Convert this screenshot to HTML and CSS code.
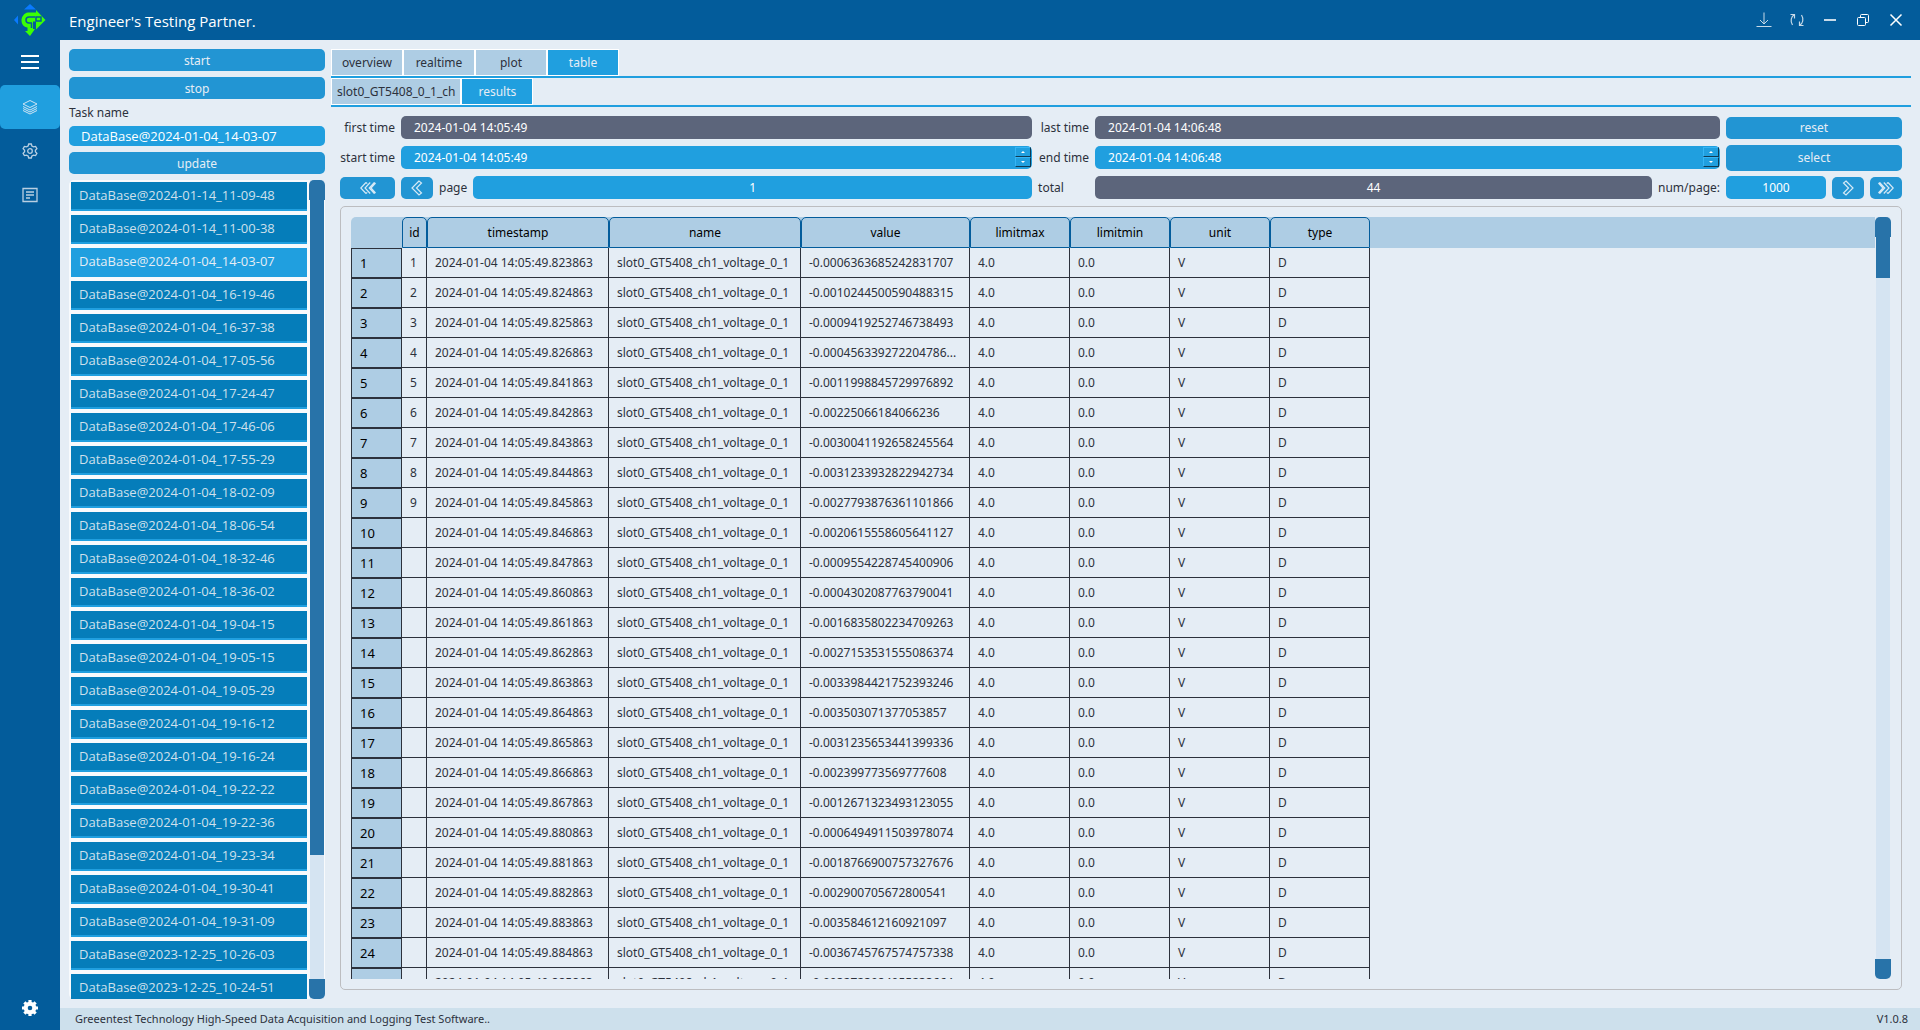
FILE: index.html
```html
<!DOCTYPE html>
<html lang="en">
<head>
  <meta charset="UTF-8">
  <title>Engineer's Testing Partner</title>
  <link rel="stylesheet" href="styles.css">
</head>
<body>
  <header class="titlebar">
    <svg class="logo" viewBox="0 0 32 32" width="32" height="32">
      <path fill="#0a7aff" d="M16 0l6 5.500H10zM0 16l4-4.500v9z"/>
      <path fill="#3bff05" d="M14 8.500h8V6l9.500 10L22 25.500v-8h-3V25h2l-5 7-5-5h2.500v-3.500C9.500 23 7.500 20 7.500 16.500S10 9 14 8.500z"/>
      <path fill="none" stroke="#035c9b" stroke-width="1.500" d="M27 13h-5v4h5zM21 13h-6c-2 0-3 1-3 3s1 3 3 3h3M17.500 19v5"/>
    </svg>
    <h1>Engineer's Testing Partner.</h1>
    <div class="window-buttons">
      <button aria-label="Download"><svg viewBox="0 0 16 16" width="16" height="16"><path d="M8 .5v11M4 8l4 4 4-4M.5 14.500h15" stroke="#c8dae8"/></svg></button>
      <button aria-label="Sync"><svg viewBox="0 0 16 16" width="16" height="16"><path d="M1.500 2.500h4v4M5.500 2.500C2 4.500 1 9 3.500 13M14.500 13.500h-4v-4M10.500 13.500c3.500-2 4.500-6.500 2-10.500" stroke="#c8dae8" stroke-width="1.200"/></svg></button>
      <button aria-label="Minimize"><svg viewBox="0 0 16 16" width="16" height="16"><path d="M2 8h12" stroke-width="2" stroke="#c8dae8"/></svg></button>
      <button aria-label="Restore"><svg viewBox="0 0 16 16" width="16" height="16"><path d="M3.500 5.500h6a1 1 0 011 1v6a1 1 0 01-1 1h-6a1 1 0 01-1-1v-6a1 1 0 011-1zM5.500 5V3.500a1 1 0 011-1h6a1 1 0 011 1v6a1 1 0 01-1 1H11"/></svg></button>
      <button aria-label="Close"><svg viewBox="0 0 16 16" width="16" height="16"><path d="M2.500 2.500l11 11M13.500 2.500l-11 11" stroke-width="1.500"/></svg></button>
    </div>
  </header>

  <div class="app">
    <nav class="sidebar">
      <button class="nav-btn" aria-label="Menu"><svg viewBox="0 0 20 16" width="20" height="16"><path d="M1 2h18M1 8h18M1 14h18" stroke-width="2"/></svg></button>
      <button class="nav-btn active" aria-label="Data"><svg viewBox="0 0 16 16" width="16" height="16"><path d="M8 1.500l7 3.500-7 3.500L1 5zM1 7.500L8 11l7-3.500M1 9.500L8 13l7-3.500M1 11.500L8 15l7-3.500" stroke="#cfe4f4"/></svg></button>
      <button class="nav-btn" aria-label="Configuration"><svg viewBox="0 0 16 16" width="16" height="16"><path d="M6.700 1h2.600l.6 2 1.600.9 2.100-.5 1.300 2.300L13.400 7.200v1.600l1.500 1.500-1.300 2.300-2.100-.5-1.600.9-.6 2H6.700l-.6-2-1.600-.9-2.100.5-1.300-2.300 1.500-1.500V7.200L1.100 5.700l1.300-2.300 2.100.5L6.100 3z" stroke="#b9cfe2" stroke-width="1.300"/><circle cx="8" cy="8" r="2.300" stroke="#b9cfe2" stroke-width="1.300"/></svg></button>
      <button class="nav-btn" aria-label="Log"><svg viewBox="0 0 16 16" width="16" height="16"><path d="M1 1.500h14v13H1zM4 5h8M4 8h8M4 11h4" stroke="#b9cfe2" stroke-width="1.300"/></svg></button>
      <button class="nav-btn nav-bottom" aria-label="Settings"><svg viewBox="0 0 16 16" width="16" height="16"><circle cx="8" cy="8" r="4.300" stroke-width="4"/><path d="M8 0v3M8 13v3M0 8h3M13 8h3M2.400 2.400l2 2M11.600 11.600l2 2M13.600 2.400l-2 2M4.400 11.600l-2 2" stroke-width="3.200"/></svg></button>
    </nav>

    <main class="content">
      <div class="workspace">
        <section class="tasks">
          <button class="btn">start</button>
          <button class="btn">stop</button>
          <label for="taskName">Task name</label>
          <input class="field task-name" id="taskName" type="text" value="DataBase@2024-01-04_14-03-07">
          <button class="btn">update</button>
          <div class="list">
            <div class="list-items" id="taskList"></div>
            <div class="scrollbar task-scroll"><i class="cap"></i><i class="thumb"></i><i class="cap end"></i></div>
          </div>
        </section>

        <section class="view">
          <div class="tabs">
            <button>overview</button>
            <button>realtime</button>
            <button>plot</button>
            <button class="active">table</button>
          </div>
          <div class="tabs">
            <button>slot0_GT5408_0_1_ch</button>
            <button class="active">results</button>
          </div>

          <div class="results">
            <div class="filters">
              <label class="right" for="firstTime">first time</label>
              <input class="field gray" id="firstTime" type="text" value="2024-01-04 14:05:49" readonly>
              <label class="right" for="lastTime">last time</label>
              <input class="field gray" id="lastTime" type="text" value="2024-01-04 14:06:48" readonly>
              <button class="btn">reset</button>

              <label class="right" for="startTime">start time</label>
              <div class="spin">
                <input class="field" id="startTime" type="text" value="2024-01-04 14:05:49">
                <div class="steps"><button class="up" aria-label="Later"></button><button class="down" aria-label="Earlier"></button></div>
              </div>
              <label class="right" for="endTime">end time</label>
              <div class="spin">
                <input class="field" id="endTime" type="text" value="2024-01-04 14:06:48">
                <div class="steps"><button class="up" aria-label="Later"></button><button class="down" aria-label="Earlier"></button></div>
              </div>
              <button class="btn tall">select</button>

              <button class="btn" aria-label="First page"><svg viewBox="0 0 16 12" width="16" height="12"><path d="M6 .5L.8 6 6 11.500M10.200 .5L5 6l5.200 5.500M14.400 .5L9.200 6l5.200 5.500M6 .5l1.200 1.200M6 11.500l1.200-1.200M14.400 .5l.8 1L11 6l4.200 4.500-.8 1" stroke-width="1.200"/></svg></button>
              <div class="group">
                <button class="btn small" aria-label="Previous page"><svg viewBox="0 0 12 16" width="12" height="16"><path d="M8 1L1 8l7 7 2.500-2L5.500 8l5-5z" stroke-width="1.200"/></svg></button>
                <label for="page">page</label>
                <input class="field center" id="page" type="text" value="1">
              </div>
              <label for="total">total</label>
              <div class="group">
                <input class="field gray center" id="total" type="text" value="44" readonly>
                <label for="perPage">num/page:</label>
              </div>
              <div class="group">
                <input class="field center" id="perPage" type="text" value="1000">
                <button class="btn small" aria-label="Next page"><svg viewBox="0 0 12 16" width="12" height="16"><path d="M4 1l7 7-7 7-2.500-2 5-5-5-5z" stroke-width="1.200"/></svg></button>
                <button class="btn small" aria-label="Last page"><svg viewBox="0 0 16 12" width="16" height="12"><path d="M10 .5L15.200 6 10 11.500M5.800 .5L11 6l-5.200 5.500M1.600 .5L6.800 6l-5.200 5.500M10 .5L8.800 1.700M10 11.500l-1.200-1.200M1.600 .5l-.8 1L5 6 .8 10.500l.8 1" stroke-width="1.200"/></svg></button>
              </div>
            </div>

            <div class="panel">
              <div class="table-area">
                <div class="header-bg"></div>
                <table>
                  <colgroup><col class="c-row"><col class="c-id"><col class="c-time"><col class="c-name"><col class="c-value"><col class="c-std"><col class="c-std"><col class="c-std"><col class="c-std"></colgroup>
                  <thead>
                    <tr><td></td><th>id</th><th>timestamp</th><th>name</th><th>value</th><th>limitmax</th><th>limitmin</th><th>unit</th><th>type</th></tr>
                  </thead>
                  <tbody id="rows"></tbody>
                </table>
              </div>
              <div class="scrollbar table-scroll"><i class="cap"></i><i class="thumb"></i><i class="cap end"></i></div>
            </div>
          </div>
        </section>
      </div>
      <footer class="statusbar">
        <span>Greeentest Technology High-Speed Data Acquisition and Logging Test Software..</span>
        <span>V1.0.8</span>
      </footer>
    </main>
  </div>

  <script>
    const tasks = [
      '2024-01-14_11-09-48', '2024-01-14_11-00-38', '2024-01-04_14-03-07', '2024-01-04_16-19-46',
      '2024-01-04_16-37-38', '2024-01-04_17-05-56', '2024-01-04_17-24-47', '2024-01-04_17-46-06',
      '2024-01-04_17-55-29', '2024-01-04_18-02-09', '2024-01-04_18-06-54', '2024-01-04_18-32-46',
      '2024-01-04_18-36-02', '2024-01-04_19-04-15', '2024-01-04_19-05-15', '2024-01-04_19-05-29',
      '2024-01-04_19-16-12', '2024-01-04_19-16-24', '2024-01-04_19-22-22', '2024-01-04_19-22-36',
      '2024-01-04_19-23-34', '2024-01-04_19-30-41', '2024-01-04_19-31-09', '2023-12-25_10-26-03',
      '2023-12-25_10-24-51'
    ];
    const selected = '2024-01-04_14-03-07';

    // [microseconds, value]
    const samples = [
      ['823863', '-0.0006363685242831707'],
      ['824863', '-0.0010244500590488315'],
      ['825863', '-0.0009419252746738493'],
      ['826863', '-0.000456339272204786...'],
      ['841863', '-0.0011998845729976892'],
      ['842863', '-0.00225066184066236'],
      ['843863', '-0.0030041192658245564'],
      ['844863', '-0.0031233932822942734'],
      ['845863', '-0.0027793876361101866'],
      ['846863', '-0.0020615558605641127'],
      ['847863', '-0.0009554228745400906'],
      ['860863', '-0.0004302087763790041'],
      ['861863', '-0.0016835802234709263'],
      ['862863', '-0.0027153531555086374'],
      ['863863', '-0.0033984421752393246'],
      ['864863', '-0.003503071377053857'],
      ['865863', '-0.0031235653441399336'],
      ['866863', '-0.002399773569777608'],
      ['867863', '-0.0012671323493123055'],
      ['880863', '-0.0006494911503978074'],
      ['881863', '-0.0018766900757327676'],
      ['882863', '-0.002900705672800541'],
      ['883863', '-0.003584612160921097'],
      ['884863', '-0.0036745767574757338'],
      ['885863', '-0.0032723984055233664']
    ];

    document.getElementById('taskList').innerHTML = tasks.map(t =>
      `<button class="${t === selected ? 'item selected' : 'item'}">DataBase@${t}</button>`
    ).join('');

    document.getElementById('rows').innerHTML = samples.map(([frac, value], i) => `
      <tr>
        <th scope="row">${i + 1}</th>
        <td>${i < 9 ? i + 1 : ''}</td>
        <td>2024-01-04 14:05:49.${frac}</td>
        <td>slot0_GT5408_ch1_voltage_0_1</td>
        <td>${value}</td>
        <td>4.0</td>
        <td>0.0</td>
        <td>V</td>
        <td>D</td>
      </tr>`).join('');
  </script>
</body>
</html>
```
FILE: styles.css
```css
* {
  box-sizing: border-box;
}
body {
  margin: 0;
  height: 100vh;
  display: flex;
  flex-direction: column;
  overflow: hidden;
  background: #e5edf5;
  color: #2c313c;
  font-family: "Noto Sans", "Open Sans", sans-serif;
  font-size: 12px;
}
button, input {
  font: inherit;
  color: inherit;
  border: 0;
  padding: 0;
  margin: 0;
  background: none;
}
svg {
  display: block;
  fill: none;
  stroke: #fff;
}

/* title bar */
.titlebar {
  height: 40px;
  flex: none;
  display: flex;
  align-items: center;
  padding: 0 16px 0 14px;
  background: #035c9b;
  color: #fff;
}
.titlebar h1 {
  flex: 1;
  margin: 0 0 0 23px;
  padding-top: 2px;
  font-family: "Open Sans", "Noto Sans", sans-serif;
  font-size: 15px;
  font-weight: normal;
}
.logo {
  stroke: none;
}
.window-buttons {
  display: flex;
  gap: 17px;
}

/* left icon bar */
.app {
  flex: 1;
  min-height: 0;
  display: flex;
}
.sidebar {
  width: 60px;
  display: flex;
  flex-direction: column;
  background: #035c9b;
}
.nav-btn {
  height: 44px;
  display: flex;
  align-items: center;
  justify-content: center;
  border-radius: 5px;
}
.nav-btn:first-child {
  margin-bottom: 1px;
}
.nav-btn.active {
  background: #209fdf;
}
.nav-bottom {
  margin-top: auto;
}
.content {
  flex: 1;
  min-width: 0;
  display: flex;
  flex-direction: column;
}
.workspace {
  flex: 1;
  min-height: 0;
  display: flex;
  gap: 6px;
  padding: 9px;
}
.statusbar {
  height: 22px;
  display: flex;
  align-items: center;
  justify-content: space-between;
  padding: 0 12px 1px 15px;
  background: #cde0ec;
  font-size: 11px;
}

/* buttons and fields */
.btn {
  height: 22px;
  display: flex;
  align-items: center;
  justify-content: center;
  border-radius: 5px;
  background: #2295d3;
  color: #e5edf5;
}
.btn svg {
  stroke: #d5e9f6;
}
.btn.small {
  width: 32px;
  flex: none;
}
.btn.tall {
  height: 26px;
}
.field {
  width: 100%;
  min-width: 0;
  height: 23px;
  padding: 0 13px;
  border-radius: 5px;
  background: #209fdf;
  color: #fff;
}
.field.gray {
  background: #5c657b;
}
.field.center {
  text-align: center;
}

/* task list */
.tasks {
  width: 256px;
  flex: none;
  display: flex;
  flex-direction: column;
  gap: 6px;
}
.tasks label {
  line-height: 15px;
}
.task-name {
  height: 20px;
  flex: none;
  padding: 0 12px;
}
.tasks .btn {
  flex: none;
}
.list {
  flex: 1;
  min-height: 0;
  display: flex;
  justify-content: space-between;
  border-radius: 5px;
  background: #f8fafc;
}
.list-items {
  width: 240px;
  display: flex;
  flex-direction: column;
  gap: 4px;
  padding: 2px 2px 0;
  overflow: hidden;
}
.item {
  height: 29px;
  flex: none;
  padding: 0 8px 1px;
  border-bottom: 2px solid #209fdf;
  background: #057dba;
  color: #cfe0ec;
  text-align: left;
}
.item, .task-name {
  font-family: "Open Sans", "Noto Sans", sans-serif;
  font-size: 13px;
}
.item.selected {
  background: #209fdf;
  color: #e5edf5;
}

/* scrollbars */
.scrollbar {
  width: 16px;
  flex: none;
  display: flex;
  flex-direction: column;
  align-items: center;
  background: linear-gradient(#d5e4f2, #d5e4f2) center / 14px 100% no-repeat;
}
.scrollbar .cap {
  width: 16px;
  height: 20px;
  border-radius: 5px 5px 0 0;
  background: #2873a9;
}
.scrollbar .cap.end {
  margin-top: auto;
  border-radius: 0 0 5px 5px;
}
.scrollbar .thumb {
  width: 14px;
  background: #2873a9;
}
.task-scroll .thumb {
  height: 80%;
}
.table-scroll .thumb {
  height: 41px;
}

/* tabs */
.view {
  flex: 1;
  min-width: 0;
  display: flex;
  flex-direction: column;
}
.tabs {
  height: 29px;
  flex: none;
  display: flex;
  border-bottom: 2px solid #209fdf;
}
.tabs button {
  min-width: 72px;
  padding: 0 5px;
  border: 1px solid #fff;
  background: #aecde4;
}
.tabs .active {
  background: #209fdf;
  color: #e5edf5;
}

/* result filters */
.results {
  flex: 1;
  min-height: 0;
  display: flex;
  flex-direction: column;
  gap: 6px;
  padding: 9px;
}
.filters {
  display: grid;
  grid-template-columns: 55px 101fr 51px 100fr 176px;
  grid-template-rows: 23px 25px 23px;
  gap: 6px;
  align-items: center;
  padding-bottom: 1px;
}
.right {
  text-align: right;
  white-space: nowrap;
}
.group {
  display: flex;
  align-items: center;
  gap: 6px;
}
.spin {
  position: relative;
}
.spin .field {
  display: block;
}
.steps {
  position: absolute;
  top: 1px;
  right: 1px;
  width: 16px;
  display: flex;
  flex-direction: column;
}
.steps button {
  height: 10px;
  display: flex;
  align-items: center;
  justify-content: center;
  border: 1px solid;
  border-color: #35b5f5 #103a52 #103a52 #35b5f5;
}
.steps button::before {
  content: "";
  border: 2px solid transparent;
}
.steps .up::before {
  border-top: 0;
  border-bottom-color: #fff;
}
.steps .down::before {
  border-bottom: 0;
  border-top-color: #fff;
}

/* data table */
.panel {
  flex: 1;
  min-height: 0;
  display: flex;
  padding: 10px;
  border: 1px solid #bcbdc0;
  border-radius: 5px;
}
.table-area {
  flex: 1;
  min-width: 0;
  display: grid;
  align-items: start;
  overflow: hidden;
}
.header-bg, .table-area table {
  grid-area: 1 / 1;
}
.header-bg {
  height: 31px;
  border-radius: 5px 0 0 0;
  background: #aecde4;
}
table {
  width: 1019px;
  table-layout: fixed;
  border-collapse: separate;
  border-spacing: 0;
}
.c-row { width: 51px; }
.c-id { width: 25px; }
.c-time { width: 182px; }
.c-name { width: 192px; }
.c-value { width: 169px; }
.c-std { width: 100px; }
th {
  padding: 0;
  font-weight: normal;
  color: #000;
}
thead th {
  height: 31px;
  border: 1px solid #035c9b;
  border-radius: 5px 5px 0 0;
  background: #aecde4;
}
tbody th {
  height: 30px;
  padding-left: 8px;
  border: 1px solid #2c313c;
  background: #aecde4;
  font-size: 13px;
  text-align: left;
}
tbody td {
  height: 30px;
  padding: 0 0 0 8px;
  border-right: 1px solid #2c313c;
  border-bottom: 1px solid #2c313c;
  white-space: nowrap;
}
```
